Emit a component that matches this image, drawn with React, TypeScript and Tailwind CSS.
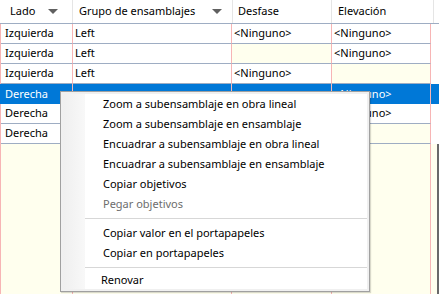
import React from 'react';

type Cell = { text?: string };

const rows: { cells: Cell[]; selected?: boolean }[] = [
  { cells: [{ text: 'Izquierda' }, { text: 'Left' }, { text: '<Ninguno>' }, { text: '<Ninguno>' }] },
  { cells: [{ text: 'Izquierda' }, { text: 'Left' }, {}, { text: '<Ninguno>' }] },
  { cells: [{ text: 'Izquierda' }, { text: 'Left' }, { text: '<Ninguno>' }, {}] },
  { cells: [{ text: 'Derecha' }, { text: '' }, { text: '' }, { text: '<Ninguno>' }], selected: true },
  { cells: [{ text: 'Derecha' }, { text: '' }, { text: '' }, { text: '<Ninguno>' }] },
  { cells: [{ text: 'Derecha' }, { text: '' }, { text: '' }, {}] },
];

const bodyCols = ['w-[72px] pl-[4px]', 'w-[159px] pl-[2px]', 'w-[100px] pl-[2px]', 'w-[99px] pl-[2px]'];

const menuItems: ({ label: string; disabled?: boolean } | 'sep')[] = [
  { label: 'Zoom a subensamblaje en obra lineal' },
  { label: 'Zoom a subensamblaje en ensamblaje' },
  { label: 'Encuadrar a subensamblaje en obra lineal' },
  { label: 'Encuadrar a subensamblaje en ensamblaje' },
  { label: 'Copiar objetivos' },
  { label: 'Pegar objetivos', disabled: true },
  'sep',
  { label: 'Copiar valor en el portapapeles' },
  { label: 'Copiar en portapapeles' },
  'sep',
  { label: 'Renovar' },
];

const SortArrow = () => (
  <svg width="10" height="5" viewBox="0 0 10 5" className="shrink-0">
    <path d="M0 0 H10 L5 5 Z" fill="#606060" />
  </svg>
);

const HeaderCell: React.FC<{ label: string; className: string; arrow?: boolean }> = ({ label, className, arrow }) => (
  <div className={`h-full flex items-center justify-between border-r border-[#e5e5e5] shrink-0 ${className}`}>
    <span>{label}</span>
    {arrow && <SortArrow />}
  </div>
);

const ContextMenu: React.FC = () => (
  <div className="absolute left-[60px] top-[91px] w-[310px] border border-[#a0a0a0] bg-[#f0f0f0] p-[2px] shadow-[1px_1px_1px_rgba(0,0,0,0.15)]">
    <div className="flex">
      <div className="w-[22px] shrink-0 bg-gradient-to-r from-[#efefef] to-[#f8f8f8]" />
      <div className="flex-1 bg-white">
        {menuItems.map((item, i) =>
          item === 'sep' ? (
            <div key={i} className="h-[9px] flex items-center">
              <div className="h-px w-full bg-[#d7d7d7]" />
            </div>
          ) : (
            <div
              key={i}
              className={`flex items-center ${item.label === 'Renovar' ? 'h-[17px] pl-[16px]' : 'h-[20px] pl-[18px]'} ${
                item.disabled ? 'text-[#6d6d6d]' : 'text-black'
              }`}
            >
              {item.label}
            </div>
          ),
        )}
      </div>
    </div>
  </div>
);

export default function App() {
  return (
    <div
      className="relative w-[439px] h-[294px] overflow-hidden flex flex-col bg-[#ffffee] text-[11px] text-black"
      style={{ fontFamily: '"Noto Sans", sans-serif' }}
    >
      {/* column header */}
      <div className="h-[24px] shrink-0 flex bg-white border-b border-[#9eadc3]">
        <HeaderCell label="Lado" arrow className="w-[73px] pl-[10px] pr-[14px]" />
        <HeaderCell label="Grupo de ensamblajes" arrow className="w-[160px] pl-[6px] pr-[10px]" />
        <HeaderCell label="Desfase" className="w-[99px] pl-[5px]" />
        <HeaderCell label="Elevación" className="w-[102px] pl-[6px]" />
      </div>

      {/* rows */}
      <div className="bg-white">
        {rows.map((row, r) => (
          <div key={r} className={`flex h-[20px] ${row.selected ? 'bg-[#0078d7] text-white' : ''}`}>
            <div className={`w-px shrink-0 ${row.selected ? 'bg-[#0078d7]' : 'bg-[#f7b5b5]'}`} />
            {row.cells.map((c, i) => (
              <div
                key={i}
                className={`shrink-0 flex items-center border-r border-[#f7b5b5] ${bodyCols[i]} ${
                  row.selected
                    ? ''
                    : `border-b border-b-[#9eadc3] ${c.text === undefined ? 'bg-[#ffffee]' : 'bg-white'}`
                }`}
              >
                {c.text}
              </div>
            ))}
          </div>
        ))}
      </div>

      {/* empty grid area */}
      <div className="flex-1 flex">
        <div className="w-px shrink-0 bg-[#f7b5b5]" />
        {bodyCols.map((c, i) => (
          <div key={i} className={`shrink-0 border-r border-[#f7b5b5] ${c}`} />
        ))}
        <div className="flex-1" />
        <div className="w-[2px] shrink-0 bg-[#696969]" />
      </div>

      <ContextMenu />
    </div>
  );
}
